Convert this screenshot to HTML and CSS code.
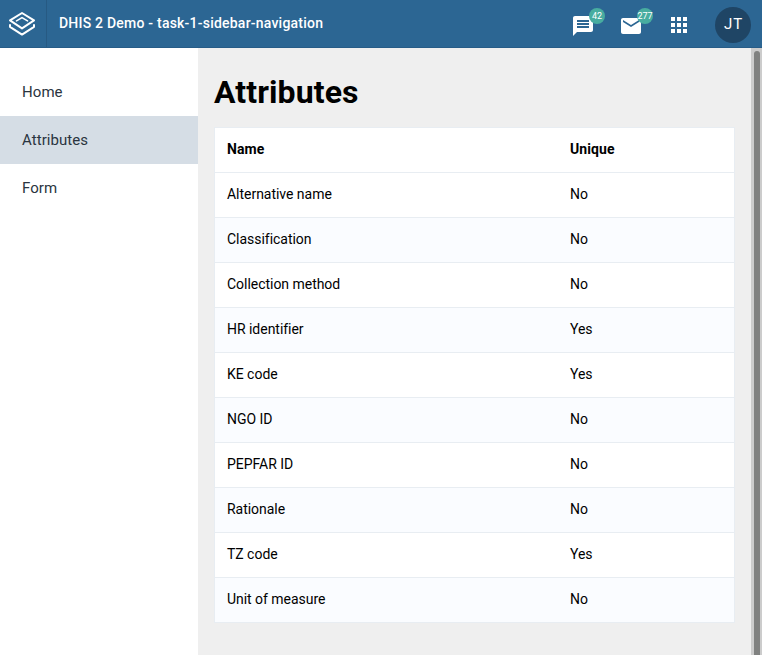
FILE: index.html
```html
<!DOCTYPE html>
<html lang="en">
<head>
<meta charset="utf-8">
<title>DHIS 2 Demo</title>
<link rel="stylesheet" href="styles.css">
</head>
<body>
<div class="app">
<header class="header">
  <a class="logo"><svg width="28" height="26" viewBox="0 0 28 26" fill="none" stroke="#fff" stroke-width="2" stroke-linejoin="round" stroke-linecap="round"><path d="M14 2 26 9.4 14 17.4 2 9.4Z"/><path d="M8.5 9.9 14 6.6 19.5 9.9" stroke-width="1.6"/><path d="M2 14V15.8L14 23.6 26 15.8V14"/></svg></a>
  <div class="title">DHIS 2 Demo - task-1-sidebar-navigation</div>
  <div class="tools">
    <a class="tool"><svg width="24" height="24" viewBox="0 0 24 24" fill="#fff"><path d="M20 2H4c-1.1 0-1.99.9-1.99 2L2 22l4-4h14c1.1 0 2-.9 2-2V4c0-1.1-.9-2-2-2zM6 9h12v2H6V9zm12 5H6v-2h12v2zm0-6H6V6h12v2z"/></svg><span class="badge">42</span></a>
    <a class="tool"><svg width="24" height="24" viewBox="0 0 24 24" fill="#fff"><path d="M20 4H4c-1.1 0-1.99.9-1.99 2L2 18c0 1.1.9 2 2 2h16c1.1 0 2-.9 2-2V6c0-1.1-.9-2-2-2zm0 4l-8 5-8-5V6l8 5 8-5v2z"/></svg><span class="badge">277</span></a>
    <a class="tool apps"><svg width="24" height="24" viewBox="0 0 24 24" fill="#fff"><path d="M4 8h4V4H4v4zm6 12h4v-4h-4v4zm-6 0h4v-4H4v4zm0-6h4v-4H4v4zm6 0h4v-4h-4v4zm6-10v4h4V4h-4zm-6 4h4V4h-4v4zm6 6h4v-4h-4v4zm0 6h4v-4h-4v4z"/></svg></a>
    <div class="avatar">JT</div>
  </div>
</header>
<div class="body">
  <nav class="sidebar">
    <a class="item">Home</a>
    <a class="item active">Attributes</a>
    <a class="item">Form</a>
  </nav>
  <main class="content">
    <h1>Attributes</h1>
    <table>
      <thead><tr><th class="name">Name</th><th>Unique</th></tr></thead>
      <tbody>
        <tr><td>Alternative name</td><td>No</td></tr>
        <tr><td>Classification</td><td>No</td></tr>
        <tr><td>Collection method</td><td>No</td></tr>
        <tr><td>HR identifier</td><td>Yes</td></tr>
        <tr><td>KE code</td><td>Yes</td></tr>
        <tr><td>NGO ID</td><td>No</td></tr>
        <tr><td>PEPFAR ID</td><td>No</td></tr>
        <tr><td>Rationale</td><td>No</td></tr>
        <tr><td>TZ code</td><td>Yes</td></tr>
        <tr><td>Unit of measure</td><td>No</td></tr>
      </tbody>
    </table>
  </main>
  <div class="scrollbar"><div class="thumb"></div></div>
</div>
</div>
</body>
</html>
```
FILE: styles.css
```css
* { box-sizing: border-box; }
body { margin: 0; background: #fff; font-family: Roboto, sans-serif; overflow: hidden; }
.app { width: 762px; height: 655px; display: flex; flex-direction: column; }
.header { height: 48px; flex: none; display: flex; background: #2c6693; border-bottom: 1px solid #275c87; color: #fff; }
.logo { width: 47px; padding: 11px 0 0 8px; border-right: 1px solid #275a83; }
.title { padding-left: 12px; line-height: 46px; font-size: 14px; font-weight: 500; letter-spacing: 0.22px; white-space: nowrap; }
.tools { margin-left: auto; display: flex; padding-right: 11px; }
.tool { position: relative; width: 24px; height: 24px; margin: 14px 24px 0 0; }
.tool.apps { margin: 13px 24px 0 0; }
.tool svg { display: block; }
.badge { position: absolute; left: 18px; top: -6px; width: 16px; height: 16px; border-radius: 8px; background: #48ada0; font-size: 9px; line-height: 16px; display: flex; justify-content: center; }
.avatar { width: 36px; height: 36px; margin-top: 7px; border-radius: 50%; background: #1f4565; font-size: 15px; line-height: 35px; letter-spacing: 1px; text-align: center; padding-left: 1px; }
.body { flex: 1; min-height: 0; display: flex; }
.sidebar { width: 198px; flex: none; padding-top: 20px; background: #fff; }
.item { display: block; height: 48px; padding-left: 22px; line-height: 48px; font-size: 15px; letter-spacing: 0.06px; color: #2a3440; }
.active { background: #d5dde5; }
.content { flex: 1; background: #efefef; padding: 25px 16px 0; overflow: hidden; }
h1 { margin: 0 0 16px; font-size: 32px; line-height: 38px; font-weight: 700; letter-spacing: 0.1px; color: #000; }
table { width: 521px; border-collapse: separate; border-spacing: 0; table-layout: fixed; border: 1px solid #e8edf2; border-bottom: 0; background: #fff; font-size: 14px; color: #000; }
th, td { height: 45px; padding: 0 12px 2px; text-align: left; vertical-align: middle; line-height: 18px; border-bottom: 1px solid #e8edf2; }
td { letter-spacing: -0.03px; }
th { font-weight: 700; letter-spacing: 0.1px; }
.name { width: 343px; }
tbody tr:nth-child(even) { background: #fafcff; }
.scrollbar { width: 11px; flex: none; background: #ccc; padding: 3px 2px 0 3px; }
.thumb { height: 100%; border-radius: 3px 3px 0 0; background: #808180; }
```
